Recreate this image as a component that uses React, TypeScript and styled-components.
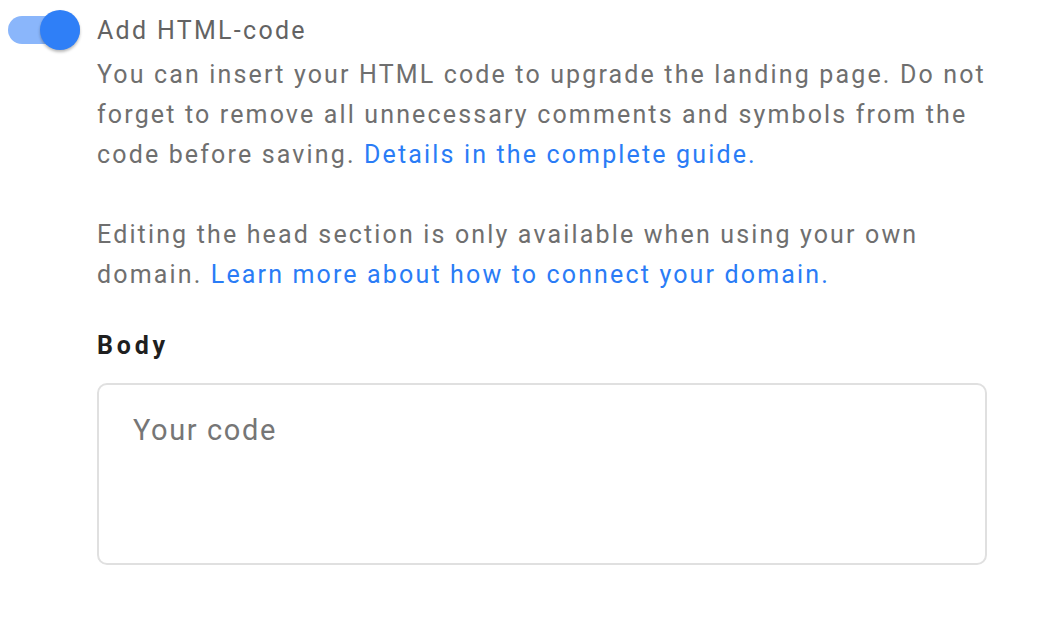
import { useState } from 'react';
import styled, { createGlobalStyle } from 'styled-components';

const GlobalStyle = createGlobalStyle`
  html, body {
    margin: 0;
    padding: 0;
    background: #ffffff;
  }
  body {
    font-family: Roboto, "Liberation Sans", sans-serif;
  }
`;

const Page = styled.div`
  display: flex;
  align-items: flex-start;
  gap: 17px;
  padding: 10px 0 0 8px;
`;

const Switch = styled.button<{ $on: boolean }>`
  position: relative;
  flex: 0 0 72px;
  height: 40px;
  padding: 0;
  border: none;
  background: transparent;
  cursor: pointer;

  &::before {
    content: '';
    position: absolute;
    left: 0;
    right: 0;
    top: 6px;
    height: 28px;
    border-radius: 14px;
    background: ${(p) => (p.$on ? '#8ab6fb' : '#c8c8c8')};
  }
`;

const Knob = styled.span<{ $on: boolean }>`
  position: absolute;
  top: 0;
  left: ${(p) => (p.$on ? '32px' : '0')};
  width: 40px;
  height: 40px;
  border-radius: 50%;
  background: ${(p) => (p.$on ? '#2f7ff7' : '#f5f5f5')};
  box-shadow: 0 2px 3px rgba(0, 0, 0, 0.28);
`;

const Content = styled.div`
  display: flex;
  flex-direction: column;
  width: 890px;
`;

const Title = styled.div`
  margin-top: 1px;
  font-size: 25px;
  line-height: 40px;
  letter-spacing: 2.3px;
  color: #636363;
`;

const Text = styled.p`
  margin: 4px 0 0;
  font-size: 25px;
  line-height: 40px;
  color: #6f6f6f;
  letter-spacing: 2.15px;

  & + & {
    margin-top: 40px;
  }
`;

const Link = styled.a`
  color: #2a7cf6;
  text-decoration: none;
`;

const Label = styled.label`
  margin-top: 31px;
  font-size: 25px;
  line-height: 40px;
  font-weight: 700;
  letter-spacing: 3.8px;
  color: #1f1f1f;
`;

const CodeArea = styled.textarea`
  box-sizing: border-box;
  margin-top: 17px;
  width: 890px;
  height: 182px;
  padding: 27px 34px;
  border: 2px solid #e0e0e0;
  border-radius: 10px;
  resize: none;
  outline: none;
  font-family: Roboto, "Liberation Sans", sans-serif;
  font-size: 29px;
  line-height: 36px;
  letter-spacing: 1.6px;
  color: #333;

  &::placeholder {
    color: #767676;
  }
`;

export default function App() {
  const [on, setOn] = useState(true);
  return (
    <>
      <GlobalStyle />
      <Page>
        <Switch $on={on} onClick={() => setOn(!on)} aria-label="Add HTML-code">
          <Knob $on={on} />
        </Switch>
        <Content>
          <Title>Add HTML-code</Title>
          <Text>
            You can insert your HTML code to upgrade the landing page. Do not forget to remove all
            unnecessary comments and symbols from the code before saving.{' '}
            <Link href="#">Details in the complete guide.</Link>
          </Text>
          <Text>
            Editing the head section is only available when using your own domain.{' '}
            <Link href="#">Learn more about how to connect your domain.</Link>
          </Text>
          <Label htmlFor="body-code">Body</Label>
          <CodeArea id="body-code" placeholder="Your code" />
        </Content>
      </Page>
    </>
  );
}
